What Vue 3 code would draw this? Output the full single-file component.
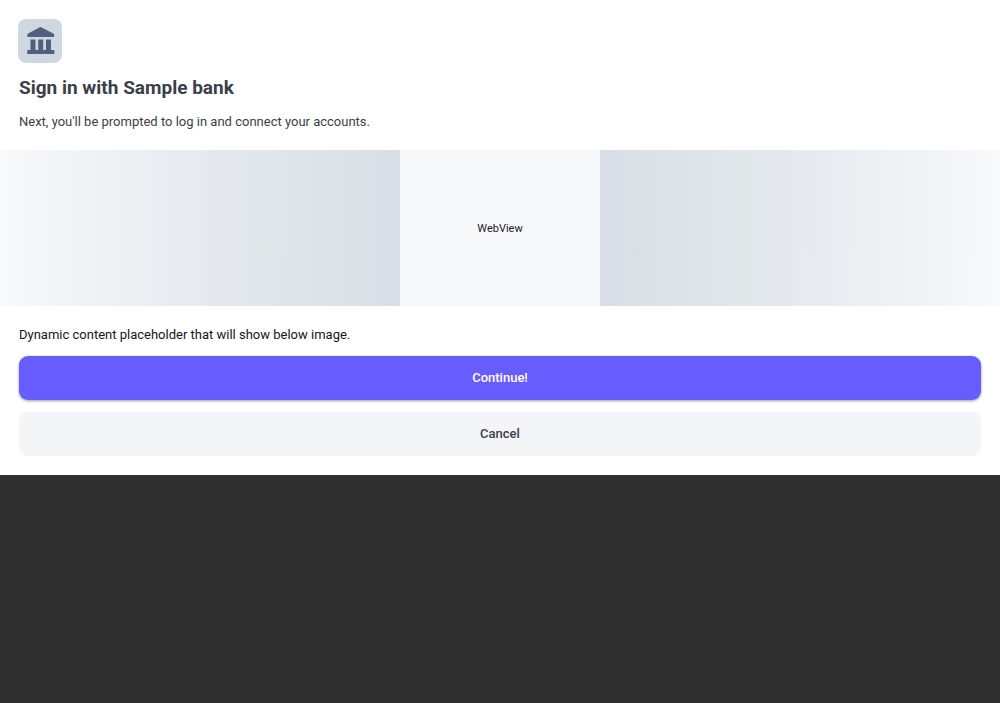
<script setup>
const bank = 'Sample bank'
</script>

<template>
  <main class="sheet">
    <header class="intro">
      <svg class="logo" viewBox="0 0 44 44" aria-hidden="true">
        <rect width="44" height="44" rx="8" fill="#cfd8df" />
        <g fill="#535f80">
          <path d="M21.8 8.3Q22.5 7.9 23.2 8.3L35.3 14.5Q36.3 15.2 36.3 16.4Q36.3 18 35 18H10.4Q9.2 18 9.2 16.4Q9.2 15.2 10.2 14.6Z" />
          <path d="M12.5 20.5H17.5V31H20.2V20.5H25.2V31H28V20.5H33V31H35.4Q36.4 31 36.4 32V35H9.2V32Q9.2 31 10.2 31H12.5Z" />
        </g>
      </svg>
      <h1>Sign in with {{ bank }}</h1>
      <p>Next, you'll be prompted to log in and connect your accounts.</p>
    </header>

    <section class="preview" aria-label="Preview">
      <div class="fade rise"></div>
      <div class="webview">WebView</div>
      <div class="fade fall"></div>
    </section>

    <section class="actions">
      <p>Dynamic content placeholder that will show below image.</p>
      <button type="button" class="primary">Continue!</button>
      <button type="button" class="secondary">Cancel</button>
    </section>
  </main>
</template>

<style>
body {
  background: #303030;
}
</style>

<style scoped>
.sheet {
  background: #fff;
  font-family: Roboto, "Liberation Sans", sans-serif;
  font-size: 13px;
  line-height: 18px;
  color: #3a3f4b;
}
.intro {
  padding: 19px 19px 19px;
}
.logo {
  display: block;
  width: 44px;
  height: 44px;
  margin-left: -1px;
}
h1 {
  margin: 12px 0 13px;
  font-size: 19px;
  line-height: 25px;
  font-weight: 700;
}
p {
  margin: 0;
}
.preview {
  display: grid;
  grid-template-columns: 2fr 1fr 2fr;
  height: 156px;
}
.fade {
  --stops: #f8f9fb, #eff3f6 22%, #e6eaee 50%, #dde3e6 80%, #d8dde6;
}
.rise {
  background: linear-gradient(to right, var(--stops));
}
.fall {
  background: linear-gradient(to left, var(--stops));
}
.webview {
  display: flex;
  align-items: center;
  justify-content: center;
  padding-top: 2px;
  background: #f7f8fa;
  color: #1c1c1c;
  font-size: 11px;
}
.actions {
  display: flex;
  flex-direction: column;
  gap: 12px;
  padding: 20px 19px 19px;
}
.actions p {
  color: #161616;
}
button {
  height: 44px;
  border: 0;
  border-radius: 9px;
  font: 500 13px/18px Roboto, "Liberation Sans", sans-serif;
}
.primary {
  background: #675dff;
  color: #fff;
  box-shadow: 0 1px 3px rgba(0, 0, 0, 0.4);
}
.secondary {
  background: #f4f5f7;
  color: #3a3f4b;
}
</style>
